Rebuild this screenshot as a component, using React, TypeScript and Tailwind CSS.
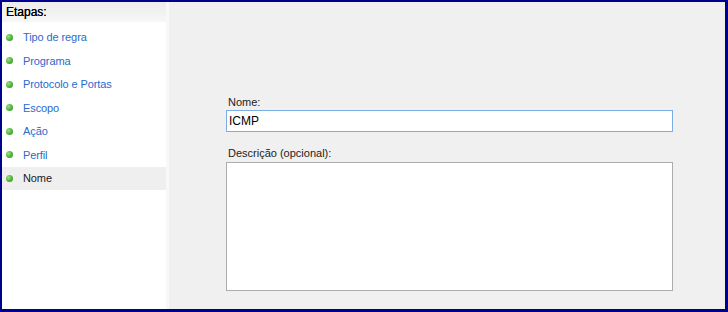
import React from "react";

const steps = ["Tipo de regra", "Programa", "Protocolo e Portas", "Escopo", "Ação", "Perfil", "Nome"];

function Dot() {
  return (
    <span
      className="block w-[7px] h-[7px] rounded-full shrink-0"
      style={{ background: "radial-gradient(circle at 35% 35%, #9be07f 0%, #4cb23a 55%, #2f8a24 100%)" }}
    />
  );
}

export default function App() {
  return (
    <div
      className="w-[728px] h-[312px] flex border-t-2 border-l-2 border-r-[3px] border-b-[3px] border-[#000090] bg-[#f0f0f0] text-[11px] overflow-hidden"
      style={{ fontFamily: '"Liberation Sans", Arial, sans-serif' }}
    >
      <div className="w-[168px] shrink-0 flex border-r border-[#f0f0f0]">
        <div className="w-[164px] bg-white flex flex-col">
          <div className="h-[20px] flex items-center pl-[4px] bg-gradient-to-b from-[#ececec] to-[#f7f7f7] text-black text-[12px] [text-shadow:0_0_0.4px_#000]">
            Etapas:
          </div>
          <div className="pt-[3.5px] flex flex-col">
            {steps.map((s, i) => {
              const sel = i === steps.length - 1;
              return (
                <div
                  key={s}
                  className={`h-[23.5px] flex items-center pl-[4px] gap-[10px] ${sel ? "bg-[#efefef] text-[#1a1a1a]" : "text-[#2a6acd]"}`}
                >
                  <Dot />
                  <span className="text-[11px] tracking-[-0.1px]">{s}</span>
                </div>
              );
            })}
          </div>
        </div>
        <div className="w-[3px] bg-[#f8f8f8]" />
      </div>
      <div className="flex-1 pl-[56px] pt-[93px] flex flex-col text-[#222]">
        <div className="text-[11px] leading-[14px] pl-[2px]">Nome:</div>
        <div className="mt-[1px] w-[447px] h-[22px] border border-[#7aaee4] bg-white flex items-center pl-[2px] text-[12px] text-black">
          ICMP
        </div>
        <div className="mt-[14px] text-[11px] leading-[14px] pl-[2px]">Descrição (opcional):</div>
        <div className="mt-[2px] w-[447px] h-[129px] border border-[#acacac] bg-white" />
      </div>
    </div>
  );
}
